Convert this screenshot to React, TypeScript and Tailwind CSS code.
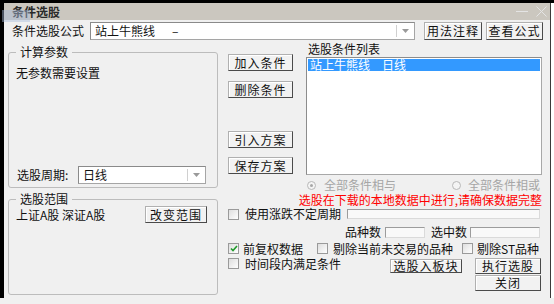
import clsx from 'clsx';
import type { ReactNode } from 'react';

function Btn({ children, className }: { children: ReactNode; className?: string }) {
  return (
    <div
      className={clsx(
        'flex items-center justify-center border border-t-[#b0b0b0] border-l-[#b0b0b0] border-r-[#4a4a4a] border-b-[#4a4a4a] bg-[#f2f2f2] shadow-[inset_1px_1px_0_#ffffff] text-[12px] leading-none tracking-[1px] text-[#111]',
        className
      )}
    >
      {children}
    </div>
  );
}

function Combo({ children, className }: { children: ReactNode; className?: string }) {
  return (
    <div
      className={clsx(
        'flex h-[18px] items-stretch border border-[#a5a5a5] border-t-[#8a8a8a] border-l-[#8a8a8a] bg-white',
        className
      )}
    >
      <div className="flex flex-1 items-center pl-[4px] leading-none">{children}</div>
      <div className="my-[2px] w-px bg-[#d0d0d0]" />
      <div className="flex w-[17px] items-center justify-center">
        <svg width="7" height="4" viewBox="0 0 7 4">
          <path d="M0 0 H7 L3.5 4 Z" fill="#9a9a9a" />
        </svg>
      </div>
    </div>
  );
}

function Check({ checked = false }: { checked?: boolean }) {
  return (
    <div className="flex h-[11px] w-[11px] shrink-0 items-center justify-center border border-[#9a9a9a] bg-gradient-to-br from-[#dedede] to-white">
      {checked && (
        <svg width="8" height="7" viewBox="0 0 8 7">
          <path d="M1 3.5 L3 5.5 L7 1" stroke="#1f9a2a" strokeWidth="1.6" fill="none" />
        </svg>
      )}
    </div>
  );
}

function Radio({ on = false }: { on?: boolean }) {
  return (
    <div className="flex h-[9px] w-[9px] shrink-0 items-center justify-center rounded-full border border-[#b8b8b8] bg-[#f4f4f4]">
      {on && <div className="h-[3px] w-[3px] rounded-full bg-[#a8a8a8]" />}
    </div>
  );
}

function Edit({ className }: { className?: string }) {
  return (
    <div
      className={clsx(
        'border border-[#dadada] border-t-[#9c9c9c] border-l-[#9c9c9c] bg-[#f9f9f9]',
        className
      )}
    />
  );
}

export default function App() {
  return (
    <div className="relative h-[304px] w-[554px] overflow-hidden whitespace-nowrap bg-[#f0f0f0] font-['Noto_Sans_CJK_SC',sans-serif] text-[12px] text-[#111]">
      <div className="h-[3px] bg-black" />
      <div className="flex h-[295px]">
        <div className="w-[4px] bg-black" />
        <div className="flex w-[546px] flex-col">
          {/* title bar */}
          <div className="flex h-[17px] items-center justify-between bg-[#cbc7bf] pl-[8px] pr-[3px]">
            <span className="font-bold leading-none text-[#2a2a2a]">条件选股</span>
            <div className="flex items-center gap-[8px]">
              <div className="h-px w-[12px] bg-[#e4e4e4]" />
              <svg width="11" height="11" viewBox="0 0 11 11">
                <path d="M0.5 0.5 L10.5 10.5 M10.5 0.5 L0.5 10.5" stroke="#e4e4e4" strokeWidth="1" />
              </svg>
            </div>
          </div>

          {/* formula row */}
          <div className="flex h-[22px] items-center pl-[8px]">
            <span className="w-[72px] leading-none">条件选股公式</span>
            <Combo className="ml-[6px] w-[325px]">
              <span>站上牛熊线</span>
              <span className="ml-[17px]">–</span>
            </Combo>
            <Btn className="ml-[9px] h-[18px] w-[58px]">用法注释</Btn>
            <Btn className="ml-[4px] h-[18px] w-[57px]">查看公式</Btn>
          </div>

          {/* body */}
          <div className="flex pl-[4px]">
            {/* left column */}
            <div className="flex w-[210px] shrink-0 flex-col">
              <fieldset className="mt-[2px] h-[144px] rounded-[3px] border border-[#bcbcbc]">
                <legend className="ml-[7px] px-[4px] leading-[16px]">计算参数</legend>
                <div className="flex h-[127px] flex-col">
                  <div className="mt-[6px] pl-[7px] leading-[14px]">无参数需要设置</div>
                  <div className="mt-auto mb-[3px] flex items-center pl-[8px]">
                    <span className="w-[61px] leading-none">选股周期:</span>
                    <Combo className="w-[128px]">日线</Combo>
                  </div>
                </div>
              </fieldset>
              <fieldset className="mt-[5px] h-[102px] rounded-[3px] border border-[#bcbcbc]">
                <legend className="ml-[7px] px-[4px] leading-[12px]">选股范围</legend>
                <div className="mt-[1px] flex h-[17px] items-center pl-[7px]">
                  <span className="leading-none">上证A股 深证A股</span>
                  <Btn className="ml-auto mr-[10px] h-[17px] w-[62px]">改变范围</Btn>
                </div>
              </fieldset>
            </div>

            {/* right area */}
            <div className="ml-[10px] flex w-[314px] shrink-0 flex-col">
              <div className="flex h-[133px]">
                <div className="flex w-[65px] flex-col">
                  <Btn className="mt-[12px] h-[17px]">加入条件</Btn>
                  <Btn className="mt-[10px] h-[17px]">删除条件</Btn>
                  <Btn className="mt-[33px] h-[17px]">引入方案</Btn>
                  <Btn className="mt-[9px] h-[17px]">保存方案</Btn>
                </div>
                <div className="ml-[13px] flex w-[236px] flex-col">
                  <div className="pl-[2px] leading-[14px]">选股条件列表</div>
                  <div className="mt-px h-[118px] border border-[#a8a8a8] border-t-[#8c8c8c] border-l-[#8c8c8c] bg-white p-px">
                    <div className="flex h-[12px] items-center bg-[#3399ff] pl-[2px] leading-none text-white">
                      <span>站上牛熊线</span>
                      <span className="ml-[12px]">日线</span>
                    </div>
                  </div>
                </div>
              </div>

              <div className="mt-[4px] flex h-[12px] items-center pl-[79px] text-[#a6a6a6]">
                <Radio on />
                <span className="ml-[8px] leading-none">全部条件相与</span>
                <div className="ml-[56px]">
                  <Radio />
                </div>
                <span className="ml-[7px] leading-none">全部条件相或</span>
              </div>

              <div className="mt-[3px] text-right leading-[12px] text-[#ff0000]">
                选股在下载的本地数据中进行,请确保数据完整
              </div>

              <div className="mt-px flex h-[14px] items-center">
                <Check />
                <span className="ml-[6px] leading-none">使用涨跌不定周期</span>
                <Edit className="ml-[6px] mr-[2px] h-[10px] flex-1" />
              </div>

              <div className="mt-[4px] flex h-[14px] items-center pl-[117px]">
                <span className="leading-none">品种数</span>
                <Edit className="ml-[4px] h-[11px] w-[40px]" />
                <span className="ml-[6px] leading-none">选中数</span>
                <Edit className="ml-[3px] mr-[2px] h-[11px] flex-1" />
              </div>

              <div className="mt-[3px] flex h-[13px] items-center">
                <Check checked />
                <span className="ml-[4px] leading-none">前复权数据</span>
                <div className="ml-[14px]">
                  <Check />
                </div>
                <span className="ml-[5px] leading-none">剔除当前未交易的品种</span>
                <div className="ml-[9px]">
                  <Check />
                </div>
                <span className="ml-[4px] leading-none">剔除ST品种</span>
              </div>

              <div className="flex items-start">
                <div className="mt-[2px] flex h-[13px] w-[162px] items-center">
                  <Check />
                  <span className="ml-[6px] leading-none">时间段内满足条件</span>
                </div>
                <Btn className="mt-[4px] h-[14px] w-[72px]">选股入板块</Btn>
                <div className="ml-[13px] flex w-[66px] flex-col">
                  <Btn className="mt-[3px] h-[16px]">执行选股</Btn>
                  <Btn className="mt-px h-[16px]">关闭</Btn>
                </div>
              </div>
            </div>
          </div>
        </div>
        <div className="w-px bg-[#3a3a3a]" />
        <div className="w-[3px] bg-white" />
      </div>
      {/* faint app icon overlapping the title */}
      <div className="absolute left-[2px] top-[10px] h-[12px] w-[28px] bg-[#a9bcdc]/45" />
    </div>
  );
}
